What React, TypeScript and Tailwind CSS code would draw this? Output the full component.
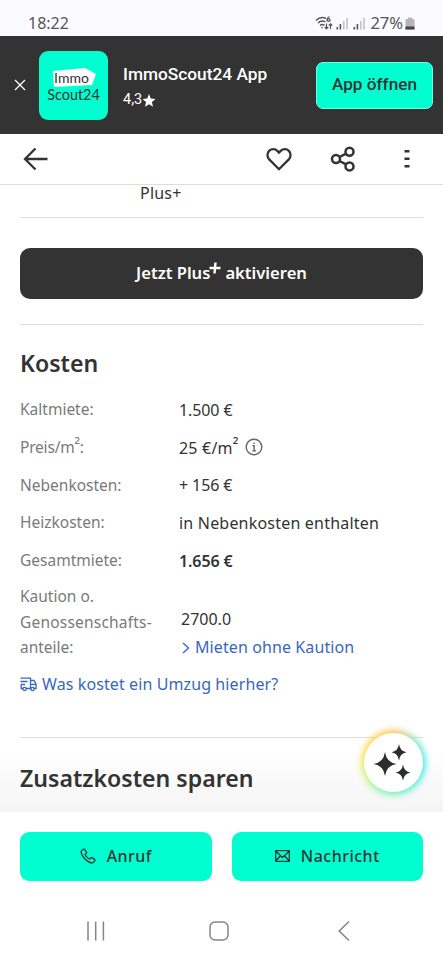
import React from 'react'

const costs = [
  { label: 'Kaltmiete:', value: '1.500 €', tight: true },
  { label: 'Preis/m²:', value: '25 €/m²', info: true },
  { label: 'Nebenkosten:', value: '+ 156 €', tight: true },
  { label: 'Heizkosten:', value: 'in Nebenkosten enthalten' },
  { label: 'Gesamtmiete:', value: '1.656 €', tight: true, bold: true },
]

function SignalIcon() {
  return (
    <svg width="13" height="13" viewBox="0 0 13 13" fill="#c4c4c8">
      <rect x="0.5" y="10" width="1.6" height="2.5" fill="#55555a" />
      <rect x="3.6" y="7" width="1.6" height="5.5" fill="#55555a" />
      <rect x="7" y="4" width="1.6" height="8.5" />
      <rect x="10.2" y="1" width="1.6" height="11.5" />
    </svg>
  )
}

function StatusBar() {
  return (
    <div className="flex h-9 items-end justify-between bg-[#fafaff] pr-7 pb-[3px] pl-7 text-[#55555a]">
      <span className="text-[16px] leading-5">18:22</span>
      <div className="flex h-5 items-center">
        <svg
          width="18"
          height="16"
          viewBox="0 0 18 16"
          fill="none"
          stroke="#55555a"
          strokeWidth="1.4"
          className="mr-[3px]"
        >
          <path d="M1 5.5C4 2.5 8 2 11 3.5M3 8C5 6 8 5.5 10.5 7M5 10.5C6.5 9.3 8 9.3 9.5 10.3" />
          <circle cx="7" cy="12.5" r="0.8" fill="#55555a" stroke="none" />
          <circle cx="13.5" cy="5" r="1.4" />
          <path
            d="M14.5 1.5C13 2 12.2 3.5 12.1 5M11.5 8.5V13.5M9.8 12L11.5 13.8L13.2 12M15.5 14V9M13.8 10.5L15.5 8.8L17.2 10.5"
            strokeWidth="1.2"
          />
        </svg>
        <SignalIcon />
        <span className="w-1" />
        <SignalIcon />
        <span className="ml-1 text-[16.5px] leading-5">27%</span>
        <svg width="10" height="13" viewBox="0 0 10 13" className="ml-[2px]">
          <path
            d="M3 0.5H7V2H8.5Q9.5 2 9.5 3V12.5H0.5V3Q0.5 2 1.5 2H3Z"
            fill="#b5b5b8"
          />
          <rect x="0.5" y="9.5" width="9" height="3" fill="#444" />
        </svg>
      </div>
    </div>
  )
}

function AppBanner() {
  return (
    <div className="flex h-[98px] items-center bg-[#333333] pr-[10px] pl-[14px] font-['Roboto',sans-serif]">
      <svg
        width="12"
        height="12"
        viewBox="0 0 12 12"
        stroke="#fff"
        strokeWidth="1.3"
      >
        <path d="M1 1L11 11M11 1L1 11" />
      </svg>
      <div className="relative ml-[13px] flex h-[69px] w-[69px] flex-col items-center justify-center rounded-[9px] bg-[#00ffd0] font-['Lato',sans-serif] text-[#333333]">
        <svg
          width="43"
          height="20"
          viewBox="0 0 43 20"
          className="absolute top-[17px] left-[14px]"
        >
          <path d="M0 3L32 0L43 6L39 17L1 19Z" fill="#fff" />
        </svg>
        <span className="relative mt-[2px] mr-1 text-[14px] leading-[17px]">
          Immo
        </span>
        <span className="relative text-[14.4px] leading-[17px]">Scout24</span>
      </div>
      <div className="mt-1 ml-[15px] flex flex-1 flex-col text-white">
        <span className="text-[17.3px] leading-6 font-medium whitespace-nowrap">
          ImmoScout24 App
        </span>
        <span className="mt-[2px] flex items-center text-[14.5px] leading-6">
          4,3
          <svg width="14" height="13" viewBox="0 0 24 24" fill="#fff">
            <path d="M12 0L15.3 8.2L24 9L17.4 14.8L19.4 23.5L12 18.8L4.6 23.5L6.6 14.8L0 9L8.7 8.2Z" />
          </svg>
        </span>
      </div>
      <button className="h-[47px] w-[117px] rounded-[7px] border border-[#6dffe2] bg-[#00ffd0] text-[17.2px] font-medium text-[#333333]">
        App öffnen
      </button>
    </div>
  )
}

function TopNav() {
  return (
    <div className="flex h-[51px] items-center border-b-[1.5px] border-[#dedede] pr-[33px] pl-[23px]">
      <svg
        width="26"
        height="24"
        viewBox="0 0 26 24"
        fill="none"
        stroke="#333"
        strokeWidth="2.3"
      >
        <path d="M24.5 12H2M12.5 1.5L2 12L12.5 22.5" />
      </svg>
      <svg
        width="26"
        height="24"
        viewBox="0 0 26 24"
        fill="none"
        stroke="#333"
        strokeWidth="2.3"
        className="ml-[217px]"
      >
        <path d="M13 22.2L3.2 12.4C0.9 10 0.9 6.2 3.1 3.9C5.4 1.6 9 1.6 11.3 3.9L13 5.6L14.7 3.9C17 1.6 20.6 1.6 22.9 3.9C25.1 6.2 25.1 10 22.8 12.4Z" />
      </svg>
      <svg
        width="26"
        height="26"
        viewBox="0 0 26 26"
        fill="none"
        stroke="#333"
        strokeWidth="2.5"
        className="ml-[38px]"
      >
        <circle cx="6" cy="13" r="4" />
        <circle cx="19.5" cy="5.7" r="4" />
        <circle cx="19.5" cy="20.4" r="4" />
        <path d="M9.6 11L16 7.6M9.6 15L16 18.4" />
      </svg>
      <svg
        width="6"
        height="18"
        viewBox="0 0 6 18"
        fill="#333"
        className="ml-auto"
      >
        <rect x="0.5" y="0" width="5" height="2.5" />
        <rect x="0.5" y="7.5" width="5" height="2.5" />
        <rect x="0.5" y="15" width="5" height="2.5" />
      </svg>
    </div>
  )
}

function TruckIcon() {
  return (
    <svg
      width="17"
      height="15"
      viewBox="0 0 17 15"
      fill="none"
      stroke="#3867c0"
      strokeWidth="1.3"
    >
      <path d="M0.5 1.2H10.5V11.5M0.5 4.5H7.5M1.2 7.5V11.5H3M6 11.5H11M14 11.5H16V7L14 3.5H10.5M10.5 7.3H16M1 7.5H5" />
      <circle cx="4.5" cy="12" r="1.6" />
      <circle cx="12.5" cy="12" r="1.6" />
    </svg>
  )
}

function Costs() {
  return (
    <section>
      <h2 className="mt-[22px] text-[23.1px] leading-8 font-semibold">
        Kosten
      </h2>
      <dl className="mt-[12px]">
        {costs.map((cost) => (
          <div key={cost.label} className="flex h-[37.7px] items-center">
            <dt className="w-[159px] text-[15.5px] text-[#7a7a7a]">
              {cost.info ? (
                <span className="tracking-[-0.2px]">
                  Preis/m<span className="relative -top-[3px]">²</span>:
                </span>
              ) : (
                cost.label
              )}
            </dt>
            <dd
              className={`flex items-center text-[16px] ${cost.tight ? 'tracking-[-0.1px]' : 'tracking-[0.2px]'} ${cost.bold ? 'font-semibold' : ''}`}
            >
              {cost.info ? (
                <span>
                  25 €/m<span className="relative -top-[3px]">²</span>
                </span>
              ) : (
                cost.value
              )}
              {cost.info && (
                <svg
                  width="18"
                  height="18"
                  viewBox="0 0 18 18"
                  fill="none"
                  stroke="#666"
                  strokeWidth="1.4"
                  className="mb-[2px] ml-[6px]"
                >
                  <circle cx="9" cy="9" r="7.8" />
                  <path d="M7.5 7.7H9.2V12.8M7.3 12.9H11M9 4.5V6" />
                </svg>
              )}
            </dd>
          </div>
        ))}
        <div className="mt-[5px] flex">
          <dt className="w-[161px] text-[15.5px] leading-[25.5px] text-[#7a7a7a]">
            Kaution o.
            <br />
            <span className="tracking-[0.2px]">Genossenschafts-</span>
            <br />
            anteile:
          </dt>
          <dd className="pt-[22px] text-[16px] leading-[27.5px]">
            <span className="block">2700.0</span>
            <a className="flex items-center tracking-[0.1px] text-[#3867c0]">
              <svg
                width="8"
                height="12"
                viewBox="0 0 8 12"
                fill="none"
                stroke="#3867c0"
                strokeWidth="1.4"
                className="mr-[5px] ml-[1px]"
              >
                <path d="M1 1L6.5 6L1 11" />
              </svg>
              Mieten ohne Kaution
            </a>
          </dd>
        </div>
      </dl>
      <a className="mt-[9px] flex h-7 items-center gap-[5px] text-[16px] tracking-[0.1px] text-[#3867c0]">
        <TruckIcon />
        Was kostet ein Umzug hierher?
      </a>
    </section>
  )
}

function AssistantButton() {
  return (
    <button className="absolute top-[548px] right-5 h-[59px] w-[59px] rounded-full">
      <span className="absolute -inset-[3px] rounded-full bg-[conic-gradient(#ffc04d,#7de8d0_50deg,#4de8ee_90deg,#5df0d0_150deg,#7df5b0_200deg,#d9f36a_250deg,#ffe04d_290deg,#ffc04d)] blur-[3px]" />
      <span className="absolute inset-0 flex items-center justify-center rounded-full bg-white pr-1">
        <svg width="38" height="38" viewBox="0 0 38 38" fill="#2d2d2d">
          <path d="M12 8Q13.5 18.5 23.5 20Q13.5 21.5 12 32Q10.5 21.5 0.5 20Q10.5 18.5 12 8Z" />
          <path d="M26 0Q27 7.2 33.5 8.3Q27 9.3 26 16.5Q25 9.3 18.5 8.3Q25 7.2 26 0Z" />
          <path d="M30 20.5Q31 27.5 37.5 28.5Q31 29.5 30 36.5Q29 29.5 22.5 28.5Q29 27.5 30 20.5Z" />
          <circle cx="12" cy="20" r="4.2" />
          <circle cx="26" cy="8.3" r="2.8" />
          <circle cx="30" cy="28.5" r="2.8" />
        </svg>
      </span>
    </button>
  )
}

function BottomBar() {
  return (
    <div className="flex h-[88px] gap-5 px-5 pt-5">
      <button className="flex h-[49px] flex-1 items-center justify-center rounded-[9px] bg-[#00ffd0] pb-[2px] text-[16px] font-medium tracking-[0.4px]">
        <svg
          width="16"
          height="16"
          viewBox="0 0 16 16"
          fill="none"
          stroke="#333"
          strokeWidth="1.3"
          className="mr-[11px]"
        >
          <path d="M3.5 1.2L1.6 2.6C0.5 4 2 8 5 11C8.5 14.3 12 15.5 13.3 14.4L14.8 12.6C15.1 12.2 15 11.7 14.6 11.4L12 9.6C11.6 9.3 11.2 9.4 10.9 9.7L9.6 11C8 10.5 5.5 8 5 6.4L6.4 5.2C6.7 4.9 6.8 4.5 6.5 4.1L4.7 1.4C4.4 1 3.9 0.9 3.5 1.2Z" />
        </svg>
        Anruf
      </button>
      <button className="flex h-[49px] flex-1 items-center justify-center rounded-[9px] bg-[#00ffd0] pb-[2px] text-[16px] font-medium tracking-[0.5px]">
        <svg
          width="15"
          height="12"
          viewBox="0 0 15 12"
          fill="none"
          stroke="#333"
          strokeWidth="1.3"
          className="mr-[11px]"
        >
          <path d="M0.7 0.7H14.3V11.3H0.7ZM0.7 1L7.5 7.5L14.3 1M0.7 11L5.5 5.7M14.3 11L9.5 5.7" />
        </svg>
        Nachricht
      </button>
    </div>
  )
}

function SystemNav() {
  return (
    <div className="flex h-[60px] items-center pt-[2px] pl-[86px]">
      <svg
        width="20"
        height="20"
        viewBox="0 0 20 20"
        stroke="#868686"
        strokeWidth="1.5"
      >
        <path d="M2 0.5V19.5M9.7 0.5V19.5M17.4 0.5V19.5" />
      </svg>
      <svg
        width="20"
        height="20"
        viewBox="0 0 20 20"
        fill="none"
        stroke="#868686"
        strokeWidth="1.5"
        className="ml-[103px]"
      >
        <rect x="1" y="1" width="18" height="18" rx="5" />
      </svg>
      <svg
        width="12"
        height="20"
        viewBox="0 0 12 20"
        fill="none"
        stroke="#868686"
        strokeWidth="1.5"
        className="ml-[109px]"
      >
        <path d="M11 0.5L1.2 10L11 19.5" />
      </svg>
    </div>
  )
}

export default function App() {
  return (
    <div className="flex h-[960px] w-[443px] flex-col overflow-hidden bg-white font-['Noto_Sans',sans-serif] text-[#333333]">
      <StatusBar />
      <AppBanner />
      <TopNav />
      <main className="relative h-[627px] bg-linear-to-b from-white from-90% to-[#f5f5f5] px-5">
        <div className="h-[33px] border-b border-[#dedede] pl-[120px] text-[16px] leading-[16px] tracking-[0.2px]">
          Plus+
        </div>
        <button className="mt-[30px] flex h-[51px] w-full items-center justify-center rounded-[10px] bg-[#333333] pb-px text-[16.6px] font-semibold text-white">
          Jetzt Plus
          <svg
            width="12"
            height="12"
            viewBox="0 0 12 12"
            stroke="#fff"
            strokeWidth="2.4"
            className="mr-[4px] mb-[10px] -ml-[1px]"
          >
            <path d="M6.5 0.5L5.5 11.5M0.5 6H11.5" />
          </svg>
          aktivieren
        </button>
        <hr className="mt-[25px] border-[#dedede]" />
        <Costs />
        <hr className="mt-[39px] border-[#dedede]" />
        <h2 className="mt-[24px] text-[23.1px] leading-8 font-semibold">
          Zusatzkosten sparen
        </h2>
        <AssistantButton />
      </main>
      <BottomBar />
      <SystemNav />
    </div>
  )
}
